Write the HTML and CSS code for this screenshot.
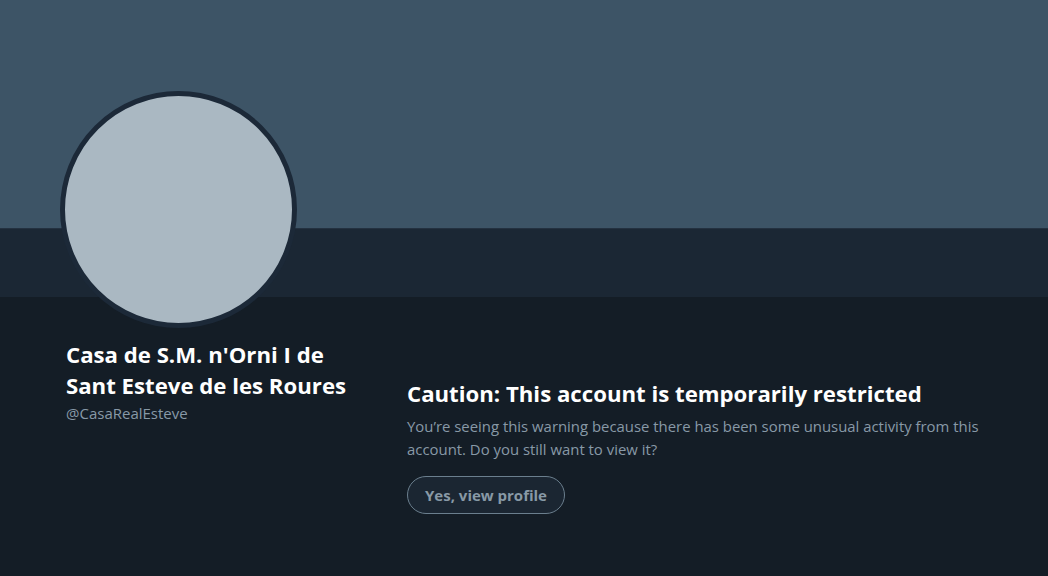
FILE: index.html
```html
<!DOCTYPE html>
<html>
<head>
<meta charset="utf-8">
<link rel="stylesheet" href="styles.css">
</head>
<body>
<div class="page">
  <div class="banner"></div>
  <div class="navband"></div>
  <div class="avatar"></div>
  <div class="content">
    <div class="profile">
      <h1 class="name">Casa de S.M. n'Orni I de Sant Esteve de les Roures</h1>
      <div class="handle">@CasaRealEsteve</div>
    </div>
    <div class="warning">
      <h2 class="title">Caution: This account is temporarily restricted</h2>
      <p class="desc">You’re seeing this warning because there has been some unusual activity from this account. Do you still want to view it?</p>
      <button class="btn">Yes, view profile</button>
    </div>
  </div>
</div>
</body>
</html>
```
FILE: styles.css
```css
html, body {
  margin: 0;
  padding: 0;
  background: #141d26;
  font-family: "Open Sans", "Noto Sans", sans-serif;
}
.page {
  position: relative;
  width: 1048px;
  height: 576px;
  overflow: hidden;
  background: #141d26;
}
.banner {
  height: 228px;
  background: #3d5466;
}
.navband {
  height: 69px;
  background: #1b2734;
  border-top: 1px solid #243140;
  box-sizing: border-box;
}
.avatar {
  position: absolute;
  left: 60px;
  top: 91px;
  width: 227px;
  height: 227px;
  border-radius: 50%;
  background: #aab8c2;
  border: 5px solid #1c2938;
}
.content {
  display: flex;
  padding-left: 66px;
}
.profile {
  width: 341px;
  padding-top: 42px;
}
.name {
  margin: 0;
  width: 300px;
  font-size: 22.2px;
  line-height: 31px;
  font-weight: 700;
  color: #ffffff;
}
.handle {
  margin-top: 2px;
  font-size: 15px;
  line-height: 20px;
  color: #8899a6;
}
.warning {
  padding-top: 81px;
  width: 600px;
}
.title {
  margin: 0;
  font-size: 22.2px;
  line-height: 32px;
  font-weight: 700;
  color: #ffffff;
}
.desc {
  margin: 5px 0 0;
  width: 590px;
  font-size: 14.9px;
  line-height: 23px;
  color: #8899a6;
}
.btn {
  margin-top: 15px;
  height: 38px;
  padding: 0 17px;
  border-radius: 19px;
  border: 1px solid #6b7f8e;
  background: #1b2632;
  color: #8899a6;
  font-family: inherit;
  font-size: 15px;
  font-weight: 700;
}
```
